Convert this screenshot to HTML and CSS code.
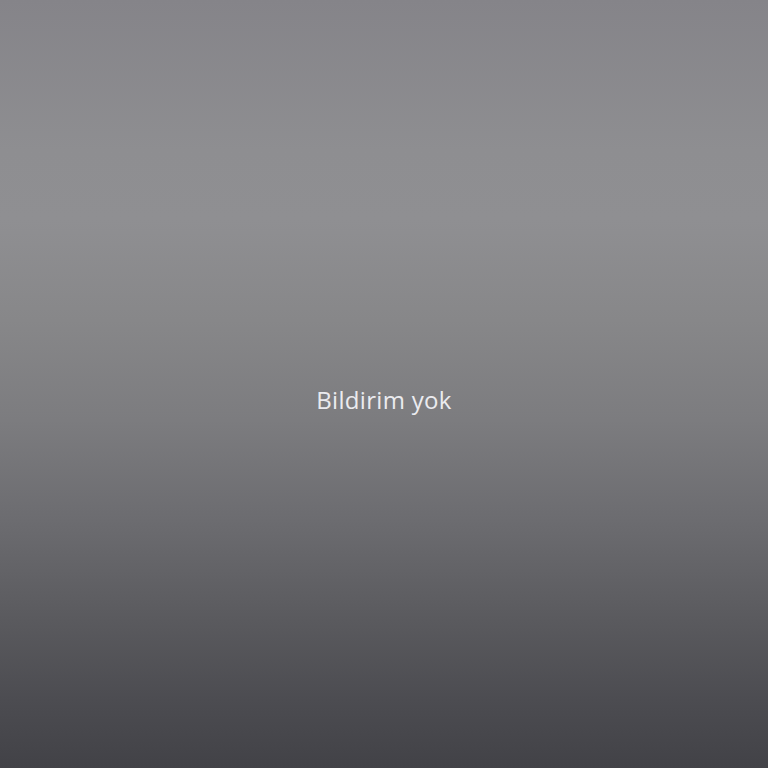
FILE: index.html
```html
<!DOCTYPE html>
<html lang="tr">
<head>
    <meta charset="UTF-8">
    <meta name="viewport" content="width=device-width, initial-scale=1.0">
    <title>Bildirimler</title>
    <link rel="stylesheet" href="styles.css">
</head>
<body>
    <div class="shade">
        <p class="empty">Bildirim yok</p>
    </div>
</body>
</html>
```

FILE: styles.css
```css
*{
    margin: 0;
    padding: 0;
    box-sizing: border-box;
}
body{
    width: 768px;
    height: 768px;
    overflow: hidden;
    font-family: "Open Sans", Roboto, sans-serif;
}
.shade{
    height: 768px;
    display: flex;
    justify-content: center;
    align-items: center;
    padding-top: 30px;
    background: linear-gradient(to bottom,
        #858489 0px,
        #8e8e91 150px,
        #8f8f92 220px,
        #878789 320px,
        #7c7c7f 420px,
        #6c6c70 520px,
        #5a5a5e 620px,
        #4c4c51 700px,
        #424247 768px);
}
.empty{
    color: #ebebef;
    font-size: 24px;
    letter-spacing: 0.3px;
}
```
